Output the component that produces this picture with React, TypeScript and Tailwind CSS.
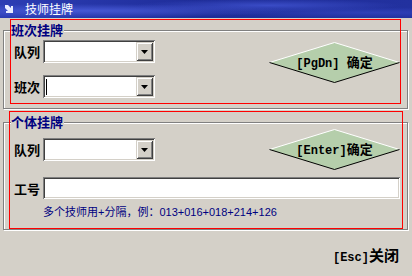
import React from 'react'

const cjk = '"Noto Sans CJK SC", "Liberation Sans", sans-serif'
const mono = '"Liberation Mono", "Noto Sans CJK SC", monospace'

const ComboBox = ({ caret = false }: { caret?: boolean }) => (
  <div className="relative flex h-[23px] w-[112px] items-stretch bg-white p-[2px] shadow-[inset_1px_1px_0_#808080,inset_-1px_-1px_0_#ffffff,inset_2px_2px_0_#404040,inset_-2px_-2px_0_#d4d0c8]">
    <div className="flex flex-1 items-center pl-[1px]">
      {caret && <div className="h-[16px] w-[1px] bg-black" />}
    </div>
    <div className="flex w-[17px] items-center justify-center bg-[#d4d0c8] shadow-[inset_1px_1px_0_#d4d0c8,inset_-1px_-1px_0_#404040,inset_2px_2px_0_#ffffff,inset_-2px_-2px_0_#808080]">
      <svg width="7" height="4" viewBox="0 0 7 4" className="mt-[1px]">
        <polygon points="0,0 7,0 3.5,4" fill="#000" />
      </svg>
    </div>
  </div>
)

// mixed label: latin part in a half-width mono face, CJK part in Noto
const KeyLabel = ({ keyText, text, cjkSize = 'text-[13px]', keySize = 'text-[12px]' }: {
  keyText: string
  text: string
  cjkSize?: string
  keySize?: string
}) => (
  <span className="flex items-baseline font-bold leading-none text-black">
    <span className={`whitespace-pre ${keySize}`} style={{ fontFamily: mono }}>{keyText}</span>
    <span className={cjkSize} style={{ fontFamily: cjk }}>{text}</span>
  </span>
)

const Diamond = ({ keyText, text }: { keyText: string; text: string }) => (
  <div className="relative h-[41px] w-[131px]">
    <svg width="131" height="41" viewBox="0 0 131 41" className="block">
      <polygon points="0.5,20.5 65.5,0.5 130.5,20.5 65.5,40.5" fill="#b5ceab" />
      <polyline points="0.5,20.5 65.5,0.5 130.5,20.5" fill="none" stroke="#ffffff" strokeWidth="1" />
      <polyline points="0.5,20.5 65.5,40.5 130.5,20.5" fill="none" stroke="#000000" strokeWidth="1" />
    </svg>
    <div className="absolute inset-0 flex items-center justify-center">
      <KeyLabel keyText={keyText} text={text} />
    </div>
  </div>
)

const Label = ({ text }: { text: string }) => (
  <span className="w-[29px] text-[13px] font-bold leading-none text-black">{text}</span>
)

const GroupBox = ({
  title,
  className,
  children,
}: {
  title: string
  className: string
  children: React.ReactNode
}) => (
  <div
    className={`relative ml-[3px] w-[405px] border border-[#808080] shadow-[1px_1px_0_#ffffff,inset_1px_1px_0_#ffffff] ${className}`}
  >
    <span className="absolute left-[7px] top-[-9px] bg-[#d4d0c8] pr-[1px] text-[13px] font-bold leading-[16px] text-[#000080]">
      {title}
    </span>
    {children}
  </div>
)

export default function App() {
  return (
    <div
      className="relative h-[276px] w-[412px] overflow-hidden bg-[#d4d0c8]"
      style={{ fontFamily: cjk }}
    >
      <div className="flex h-[18px] items-center gap-[11px] bg-[radial-gradient(ellipse_at_20%_60%,#4658d4_0%,transparent_45%),radial-gradient(ellipse_at_65%_30%,#3a4cc6_0%,transparent_35%),radial-gradient(ellipse_at_90%_70%,#2f40b8_0%,transparent_30%),linear-gradient(90deg,#2c3db4,#1e2c98_50%,#22319f)] pl-[5px]">
        <svg width="9" height="9" viewBox="0 0 9 9">
          <polygon points="0,0 3,0 6,3 6,1 8,1 8,8 1,8 1,6 3,6 0,3" fill="#e8ecff" />
        </svg>
        <span className="text-[12px] leading-none text-white">技师挂牌</span>
      </div>

      <GroupBox title="班次挂牌" className="mt-[12px] h-[79px]">
        <div className="flex pl-[10px] pt-[9px]">
          <div className="flex flex-col gap-[12px]">
            <div className="flex items-center">
              <Label text="队列" />
              <ComboBox />
            </div>
            <div className="flex items-center">
              <Label text="班次" />
              <ComboBox caret />
            </div>
          </div>
          <div className="ml-[114px] mt-[2px]">
            <Diamond keyText="[PgDn] " text="确定" />
          </div>
        </div>
      </GroupBox>

      <GroupBox title="个体挂牌" className="mt-[13px] h-[108px]">
        <div className="flex flex-col pl-[10px] pt-[6px]">
          <div className="flex h-[41px] items-center">
            <Label text="队列" />
            <ComboBox />
            <div className="ml-[114px]">
              <Diamond keyText="[Enter]" text="确定" />
            </div>
          </div>
          <div className="mt-[7px] flex items-center">
            <Label text="工号" />
            <div className="h-[22px] w-[357px] bg-white shadow-[inset_1px_1px_0_#808080,inset_-1px_-1px_0_#ffffff,inset_2px_2px_0_#404040,inset_-2px_-2px_0_#d4d0c8]" />
          </div>
          <div
            className="mt-[6px] pl-[29px] text-[11px] leading-[14px] text-[#000080]"
            style={{ fontFamily: '"Liberation Sans", "Noto Sans CJK SC", sans-serif' }}
          >
            多个技师用+分隔，例：013+016+018+214+126
          </div>
        </div>
      </GroupBox>

      <div className="mt-[17px] flex justify-end pr-[13px]">
        <KeyLabel keyText="[Esc]" text="关闭" keySize="text-[12px]" cjkSize="text-[15px]" />
      </div>

      <div className="pointer-events-none absolute left-[10px] top-[19px] h-[85px] w-[391px] border border-[#ff0000]" />
      <div className="pointer-events-none absolute left-[9px] top-[111px] h-[118px] w-[394px] border border-[#ff0000]" />
    </div>
  )
}
